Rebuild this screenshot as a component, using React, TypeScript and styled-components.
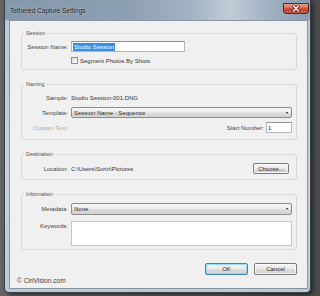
import React from 'react';
import styled, { createGlobalStyle } from 'styled-components';

const GlobalStyle = createGlobalStyle`
  html, body {
    margin: 0;
    padding: 0;
    background: #5b5b5b;
  }
  body {
    width: 320px;
    height: 296px;
    overflow: hidden;
    font-family: "Liberation Sans", Arial, sans-serif;
  }
  * {
    box-sizing: border-box;
  }
`;

const Desktop = styled.div`
  width: 320px;
  height: 296px;
  padding-left: 4px;
  background: linear-gradient(90deg, #656565 0%, #5b5b5b 60%, #4a4a4a 100%);
`;

const Window = styled.div`
  width: 307px;
  height: 293px;
  display: flex;
  flex-direction: column;
  border: 1px solid #3a434d;
  border-top: none;
  border-radius: 0 0 5px 5px;
  background: linear-gradient(180deg, #9fb0c1 0px, #bcc8d4 24px, #c9d2db 60%, #bec9d4 100%);
  box-shadow: 2px 2px 4px rgba(0, 0, 0, 0.55);
`;

const TitleBar = styled.div`
  height: 20px;
  flex: none;
  display: flex;
  align-items: flex-start;
  padding-left: 5px;
  background: linear-gradient(
    90deg,
    #8597aa 0%,
    #8d9fb2 40%,
    #a4b4c4 62%,
    #c1ccd7 74%,
    #a2b2c2 86%,
    #899cb0 100%
  );
`;

const Title = styled.span`
  margin-top: 7px;
  font-size: 6.5px;
  line-height: 8px;
  color: #1b1b1b;
  text-shadow: 0 0 3px rgba(255, 255, 255, 0.7);
`;

const CloseButton = styled.div`
  margin: 3px 1px 0 auto;
  width: 26px;
  height: 11px;
  border: 1px solid #5b2520;
  border-radius: 0 0 3px 3px;
  background: linear-gradient(180deg, #e8a394 0%, #d66a58 45%, #c2412f 55%, #c85a44 100%);
  display: flex;
  align-items: center;
  justify-content: center;
`;

const Client = styled.div`
  flex: 1;
  margin: 0 2px 3px 4px;
  background: #f0f0f0;
  border: 1px solid #8694a3;
  display: flex;
  flex-direction: column;
  padding: 9px 10px 0 11px;
`;

const Group = styled.fieldset<{ $pt: number; $pb: number; $gap?: number }>`
  margin: 0;
  min-width: 0;
  border: 1px solid #d5d9dd;
  border-radius: 3px;
  padding: ${p => p.$pt}px 4px ${p => p.$pb}px 0;
  display: flex;
  flex-direction: column;
  gap: ${p => p.$gap ?? 4}px;

  & + & {
    margin-top: 11px;
  }
`;

const Legend = styled.legend`
  font-size: 5.4px;
  line-height: 7px;
  color: #505050;
  padding: 0 2px;
  margin-left: 2px;
`;

const Row = styled.div<{ $h: number; $top?: boolean }>`
  display: grid;
  grid-template-columns: 46px 1fr;
  column-gap: 3px;
  align-items: ${p => (p.$top ? 'start' : 'center')};
  height: ${p => p.$h}px;
`;

const Label = styled.span<{ $disabled?: boolean; $offset?: number }>`
  text-align: right;
  white-space: nowrap;
  font-size: 6px;
  line-height: 8px;
  margin-top: ${p => p.$offset ?? 0}px;
  color: ${p => (p.$disabled ? '#a8a8a8' : '#444444')};
`;

const Value = styled.span`
  font-size: 6px;
  line-height: 8px;
  color: #333333;
  white-space: nowrap;
`;

const Field = styled.div<{ $w?: number; $h?: number }>`
  width: ${p => (p.$w ? `${p.$w}px` : '100%')};
  height: ${p => (p.$h ? `${p.$h}px` : '100%')};
  background: #ffffff;
  border: 1px solid #b4b7bd;
  border-top-color: #8f9298;
  padding-left: 1px;
  display: flex;
  align-items: center;
  font-size: 6px;
  color: #333333;
`;

const Keywords = styled(Field)`
  border-color: #b9cadb;
`;

const Selected = styled.span`
  background: #3a8ee6;
  color: #ffffff;
  padding: 0 1px;
  line-height: 8px;
`;

const Inline = styled.div<{ $justify?: string; $gap?: number }>`
  display: flex;
  align-items: center;
  justify-content: ${p => p.$justify ?? 'flex-start'};
  gap: ${p => p.$gap ?? 0}px;
  height: 100%;
`;

const Check = styled.span`
  width: 7px;
  height: 7px;
  border: 1px solid #8e8f8f;
  background: linear-gradient(135deg, #d8d8d8, #ffffff);
`;

const Select = styled.div`
  height: 100%;
  border: 1px solid #8d8d8d;
  border-radius: 2px;
  background: linear-gradient(180deg, #f7f7f7 0%, #ececec 48%, #dedede 52%, #d2d2d2 100%);
  display: flex;
  align-items: center;
  justify-content: space-between;
  padding: 0 3px 0 2px;
  font-size: 6px;
  color: #2a2a2a;
`;

const Caret = styled.span`
  width: 0;
  height: 0;
  border-left: 1.5px solid transparent;
  border-right: 1.5px solid transparent;
  border-top: 2px solid #1e1e1e;
`;

const Button = styled.button<{ $w: number; $primary?: boolean }>`
  width: ${p => p.$w}px;
  height: 100%;
  margin: 0;
  padding: 0;
  font-family: "Liberation Sans", Arial, sans-serif;
  font-size: 6px;
  color: #2a2a2a;
  border: 1px solid ${p => (p.$primary ? '#3d86bd' : '#7a7a7a')};
  border-radius: 2px;
  background: linear-gradient(180deg, #f3f3f3 0%, #ebebeb 48%, #dddddd 52%, #d0d0d0 100%);
  box-shadow: inset 0 0 0 1px ${p => (p.$primary ? 'rgba(140, 215, 245, 0.9)' : 'rgba(255, 255, 255, 0.75)')};
`;

const Footer = styled.div`
  flex: 1;
  display: flex;
  align-items: flex-start;
  padding-top: 13px;
`;

const Copyright = styled.span`
  align-self: flex-end;
  margin: 0 0 3px -4px;
  font-size: 6.6px;
  line-height: 8px;
  color: #3f3f3f;
`;

const Actions = styled.div`
  margin-left: auto;
  height: 12px;
  display: flex;
  gap: 6px;
`;

const CloseGlyph = () => (
  <svg width="8" height="7" viewBox="0 0 8 7">
    <path d="M1.5 1 L6.5 6 M6.5 1 L1.5 6" stroke="#5a1d15" strokeWidth="2.6" strokeLinecap="round" />
    <path d="M1.5 1 L6.5 6 M6.5 1 L1.5 6" stroke="#ffffff" strokeWidth="1.4" strokeLinecap="round" />
  </svg>
);

const App: React.FC = () => {
  return (
    <>
      <GlobalStyle />
      <Desktop>
        <Window>
          <TitleBar>
            <Title>Tethered Capture Settings</Title>
            <CloseButton>
              <CloseGlyph />
            </CloseButton>
          </TitleBar>

          <Client>
            <Group $pt={4} $pb={4}>
              <Legend>Session</Legend>
              <Row $h={11}>
                <Label>Session Name:</Label>
                <Field $w={114}>
                  <Selected>Studio Session</Selected>
                </Field>
              </Row>
              <Row $h={9}>
                <span />
                <Inline $gap={2}>
                  <Check />
                  <Value>Segment Photos By Shots</Value>
                </Inline>
              </Row>
            </Group>

            <Group $pt={4} $pb={6}>
              <Legend>Naming</Legend>
              <Row $h={11}>
                <Label>Sample:</Label>
                <Value>Studio Session-001.DNG</Value>
              </Row>
              <Row $h={11}>
                <Label>Template:</Label>
                <Select>
                  Session Name - Sequence
                  <Caret />
                </Select>
              </Row>
              <Row $h={11}>
                <Label $disabled>Custom Text:</Label>
                <Inline $justify="flex-end" $gap={2}>
                  <Label>Start Number:</Label>
                  <Field $w={26}>1</Field>
                </Inline>
              </Row>
            </Group>

            <Group $pt={5} $pb={5}>
              <Legend>Destination</Legend>
              <Row $h={11}>
                <Label>Location:</Label>
                <Inline $justify="space-between">
                  <Value>C:\Users\Sorin\Pictures</Value>
                  <Button $w={36} style={{ marginRight: 3 }}>Choose...</Button>
                </Inline>
              </Row>
            </Group>

            <Group $pt={5} $pb={3} $gap={6}>
              <Legend>Information</Legend>
              <Row $h={12}>
                <Label>Metadata:</Label>
                <Select>
                  None
                  <Caret />
                </Select>
              </Row>
              <Row $h={25} $top>
                <Label $offset={1}>Keywords:</Label>
                <Keywords />
              </Row>
            </Group>

            <Footer>
              <Copyright>© CiriVision.com</Copyright>
              <Actions>
                <Button $w={43} $primary>OK</Button>
                <Button $w={43}>Cancel</Button>
              </Actions>
            </Footer>
          </Client>
        </Window>
      </Desktop>
    </>
  );
};

export default App;
